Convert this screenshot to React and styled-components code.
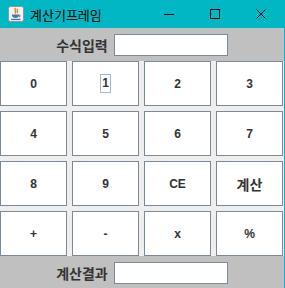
import React from 'react';
import styled, { createGlobalStyle } from 'styled-components';

const GlobalStyle = createGlobalStyle`
  html, body {
    margin: 0;
    padding: 0;
    background: #eeeeee;
  }
`;

const Frame = styled.div`
  width: 284px;
  height: 288px;
  border-right: 1px solid #00b7c3;
  display: flex;
  flex-direction: column;
  background: #eeeeee;
  overflow: hidden;
`;

const TitleBar = styled.div`
  height: 28px;
  flex: none;
  background: #00b7c3;
  display: flex;
  align-items: center;
  padding-left: 8px;
`;

const Title = styled.span`
  margin-left: 6px;
  font-family: "Noto Sans CJK KR", "Liberation Sans", sans-serif;
  font-size: 13px;
  color: #000;
  flex: 1;
`;

const WinButton = styled.div`
  width: 46px;
  height: 28px;
  display: flex;
  align-items: center;
  justify-content: center;
`;

const Panel = styled.div`
  height: ${p => p.$h}px;
  flex: none;
  background: #c0c0c0;
  display: flex;
  justify-content: center;
  align-items: ${p => p.$align || 'center'};
  padding-top: ${p => p.$pt || 0}px;
  box-sizing: border-box;
  gap: 6px;
`;

const Label = styled.span`
  font-family: "Noto Sans CJK KR", "Liberation Sans", sans-serif;
  font-weight: 700;
  font-size: 14px;
  line-height: 22px;
  color: #333;
`;

const Field = styled.div`
  width: 114px;
  height: 22px;
  box-sizing: border-box;
  background: #fff;
  border: 1px solid #7a8a99;
  box-shadow: inset 0 0 0 1px #fff;
`;

const Grid = styled.div`
  display: grid;
  grid-template-columns: repeat(4, 67px);
  grid-template-rows: repeat(4, 45px);
  gap: 5px;
  flex: none;
`;

const Key = styled.div`
  box-sizing: border-box;
  background: #fff;
  border: 1px solid #7a8a99;
  display: flex;
  align-items: center;
  justify-content: center;
  font-family: "Liberation Sans", "Noto Sans CJK KR", sans-serif;
  font-weight: 700;
  font-size: ${p => (p.$kr ? 14 : 12)}px;
  color: #333;
`;

const Focus = styled.span`
  border: 1px solid #a3b8cc;
  padding: 2px 1px;
  line-height: 13px;
`;

const JavaIcon = () => (
  <svg width="16" height="16" viewBox="0 0 16 16">
    <rect x="0.5" y="0.5" width="15" height="15" rx="2" fill="#f2f2f2" stroke="#8a96a3" />
    <path d="M7.5 2 C5.5 4 9 5 7 7.5 M9.5 3 C8.3 4.5 10.7 5 9 7" stroke="#e8751a" strokeWidth="1.3" fill="none" />
    <path d="M4 8.5 h7 v1 c0 1.6-1.6 2.5-3.5 2.5 S4 11.1 4 9.5z" fill="#4a78a0" />
    <path d="M11 9 c1.6 0 1.6 1.8 0 2" stroke="#4a78a0" strokeWidth="1" fill="none" />
    <rect x="3" y="12.8" width="9.5" height="1.3" fill="#4a78a0" />
  </svg>
);

const keys = ['0', '1', '2', '3', '4', '5', '6', '7', '8', '9', 'CE', '계산', '+', '-', 'x', '%'];

export default function App() {
  return (
    <>
      <GlobalStyle />
      <Frame>
        <TitleBar>
          <JavaIcon />
          <Title>계산기프레임</Title>
          <WinButton>
            <svg width="10" height="10"><path d="M0 5.5 h10" stroke="#000" strokeWidth="1" /></svg>
          </WinButton>
          <WinButton>
            <svg width="10" height="10"><rect x="0.5" y="0.5" width="9" height="9" stroke="#000" fill="none" /></svg>
          </WinButton>
          <WinButton>
            <svg width="10" height="10"><path d="M0.5 0.5 L9.5 9.5 M9.5 0.5 L0.5 9.5" stroke="#000" strokeWidth="1" /></svg>
          </WinButton>
        </TitleBar>
        <Panel $h={33}>
          <Label>수식입력</Label>
          <Field />
        </Panel>
        <Grid>
          {keys.map(k => (
            <Key key={k} $kr={k === '계산'}>
              {k === '1' ? <Focus>{k}</Focus> : k}
            </Key>
          ))}
        </Grid>
        <Panel $h={32} $align="flex-start" $pt={6}>
          <Label>계산결과</Label>
          <Field />
        </Panel>
      </Frame>
    </>
  );
}
